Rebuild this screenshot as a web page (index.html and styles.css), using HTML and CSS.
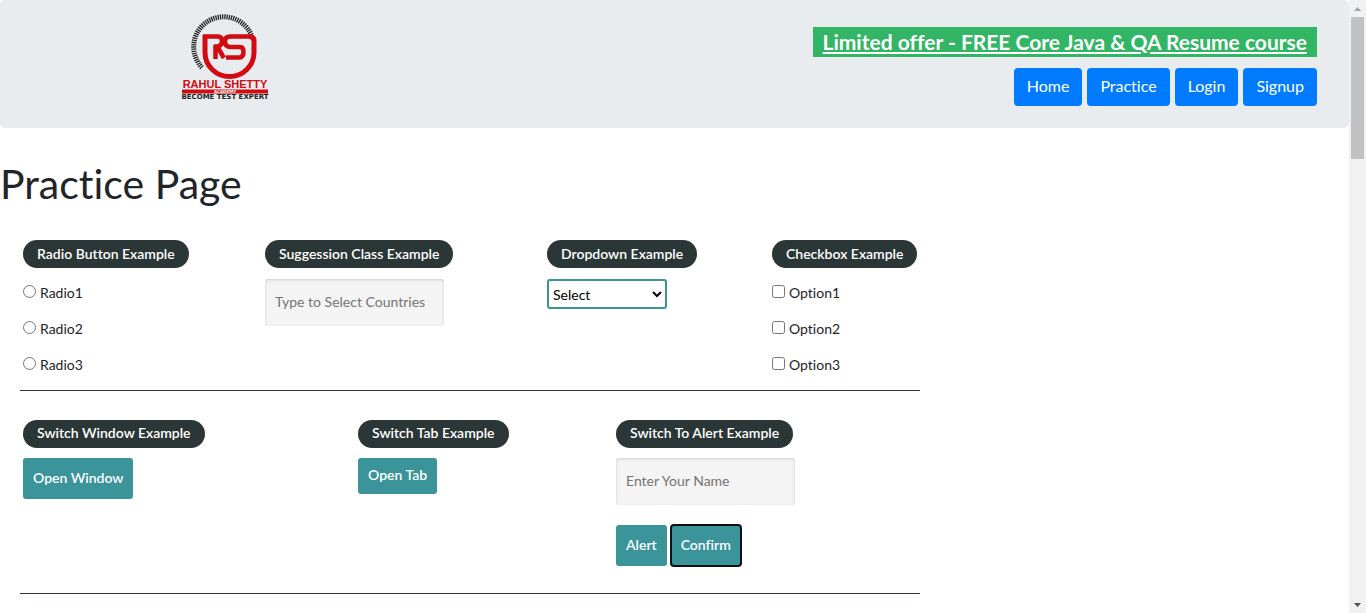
FILE: index.html
```html
<!DOCTYPE html>
<html lang="en">
<head>
<meta charset="utf-8">
<title>Practice Page</title>
<link rel="stylesheet" href="styles.css">
</head>
<body>
<div class="page">
  <header class="banner">
    <a class="brand" href="#" aria-label="Rahul Shetty Academy">
      <svg class="logo" viewBox="0 0 86 87" width="86" height="87" aria-hidden="true">
        <path d="M20 55.500A30 30 0 1 1 69.500 23.500" fill="none" stroke="#222" stroke-width="5" stroke-dasharray="1.300 0.900"/>
        <path d="M23 23V40.500A24.500 24 0 0 0 72 40.500V29Q72 24.500 67 24.500" fill="none" stroke="#d20a11" stroke-width="5"/>
        <path d="M21 24.500H36Q40 24.500 40 29T36 34.500H32M33.500 33V47M35 34L42 46M68 24.500H48Q43 24.500 43 29.500T48 35H58Q61.500 35 61.500 40T58 45.500H44" fill="none" stroke="#d20a11" stroke-width="4.500"/>
        <text class="logo-name" x="43" y="76" text-anchor="middle">RAHUL SHETTY</text>
        <path d="M0 77.500H86V81.500H0z" fill="#d20a11"/>
        <text class="logo-academy" x="43" y="81" text-anchor="middle">ACADEMY</text>
        <text class="logo-tag" x="43" y="87" text-anchor="middle">BECOME TEST EXPERT</text>
      </svg>
    </a>
    <div class="banner-side">
      <a class="offer" href="#">Limited offer - FREE Core Java &amp; QA Resume course</a>
      <nav class="nav">
        <button class="nav-button" type="button">Home</button>
        <button class="nav-button" type="button">Practice</button>
        <button class="nav-button" type="button">Login</button>
        <button class="nav-button" type="button">Signup</button>
      </nav>
    </div>
  </header>

  <main>
    <h1 class="title">Practice Page</h1>
    <div class="examples">
      <section class="row row-four">
        <fieldset class="group">
          <legend class="pill">Radio Button Example</legend>
          <label class="choice"><input type="radio" name="radio">Radio1</label>
          <label class="choice"><input type="radio" name="radio">Radio2</label>
          <label class="choice"><input type="radio" name="radio">Radio3</label>
        </fieldset>
        <fieldset class="group">
          <legend class="pill">Suggession Class Example</legend>
          <input class="field" type="text" placeholder="Type to Select Countries" aria-label="Country">
        </fieldset>
        <fieldset class="group">
          <legend class="pill">Dropdown Example</legend>
          <select class="dropdown" aria-label="Dropdown"><option>Select</option></select>
        </fieldset>
        <fieldset class="group">
          <legend class="pill">Checkbox Example</legend>
          <label class="choice"><input type="checkbox">Option1</label>
          <label class="choice"><input type="checkbox">Option2</label>
          <label class="choice"><input type="checkbox">Option3</label>
        </fieldset>
      </section>
      <section class="row row-three">
        <fieldset class="group">
          <legend class="pill">Switch Window Example</legend>
          <button class="action" type="button">Open Window</button>
        </fieldset>
        <fieldset class="group">
          <legend class="pill">Switch Tab Example</legend>
          <a class="action action-link" href="#">Open Tab</a>
        </fieldset>
        <fieldset class="group">
          <legend class="pill">Switch To Alert Example</legend>
          <input class="field" type="text" placeholder="Enter Your Name" aria-label="Name">
          <div class="actions">
            <button class="action" type="button">Alert</button>
            <button class="action action-focused" type="button">Confirm</button>
          </div>
        </fieldset>
      </section>
    </div>
  </main>
</div>
<div class="scrollbar" aria-hidden="true">
  <svg class="arrow" viewBox="0 0 17 17"><path d="M5 11L8.500 7L12 11z" fill="#a3a3a3"/></svg>
  <div class="thumb"></div>
  <svg class="arrow arrow-down" viewBox="0 0 17 17"><path d="M5 7H12L8.500 11z" fill="#505050"/></svg>
</div>
</body>
</html>
```

FILE: styles.css
```css
* { box-sizing: border-box; }
body {
  margin: 0;
  display: flex;
  height: 100vh;
  overflow: hidden;
  background: #fff;
  color: #212529;
  font: 14px/20px "Trebuchet MS", Lato, sans-serif;
  font-variant-ligatures: none;
}
button, input, select { font: inherit; margin: 0; }
.page { flex: 1; min-width: 0; }
.banner {
  display: flex;
  justify-content: space-between;
  min-height: 128px;
  padding: 12px 32px 22px 182px;
  background: #e9ecef;
  border-radius: 5px;
}
.logo { display: block; overflow: visible; }
.logo-name { font: 700 11px "Liberation Sans", sans-serif; fill: #d20a11; }
.logo-academy { font: 700 4px "DejaVu Sans", sans-serif; fill: #fff; }
.logo-tag { font: 700 7px "DejaVu Sans", sans-serif; fill: #222; }
.banner-side {
  display: flex;
  flex-direction: column;
  align-items: flex-end;
  gap: 11px;
  padding-top: 15px;
}
.offer {
  padding: 0 10px;
  background: #32b665;
  color: #fff;
  font-size: 21px;
  font-weight: 700;
  line-height: 30px;
  text-decoration: underline;
}
.nav { display: flex; gap: 5px; }
.nav-button {
  height: 38px;
  padding: 0 13px 2px;
  border: 0;
  border-radius: 4px;
  background: #007bff;
  color: #fff;
  font-size: 16px;
}
.title {
  margin: 32px 0;
  font-size: 41px;
  font-weight: 400;
  line-height: 48px;
}
.examples { max-width: 900px; margin-left: 20px; }
.row {
  display: grid;
  padding: 0 3px;
  border-bottom: 1px solid #2b3636;
}
.row-four { grid-template-columns: 242fr 282fr 225fr 145fr; padding-bottom: 3px; }
.row-three { grid-template-columns: 335fr 258fr 301fr; padding: 29px 3px 27px; }
.group { min-width: 0; margin: 0; padding: 0; border: 0; }
.pill {
  height: 28px;
  margin-bottom: 11px;
  padding: 0 14px;
  border-radius: 14px;
  background: #2b3636;
  color: #fff;
  font-weight: 600;
  line-height: 28px;
  white-space: nowrap;
}
.row-three .pill { margin-bottom: 10px; line-height: 26px; }
.choice {
  display: flex;
  align-items: center;
  gap: 4px;
  height: 28px;
  margin-bottom: 8px;
}
.choice input { width: 13px; height: 13px; margin-bottom: 3px; }
.field {
  display: block;
  width: 179px;
  height: 47px;
  padding: 0 10px 2px;
  border: 0;
  border-radius: 3px;
  background: #f4f4f4;
  box-shadow: inset 0 1px 3px #ccc;
}
.field::placeholder { color: #757575; }
.dropdown {
  width: 120px;
  height: 30px;
  border: 2px solid #3a9499;
  border-radius: 3px;
  background: #fff;
  color: #000;
}
.action {
  display: inline-block;
  height: 41px;
  padding: 0 10px 2px;
  border: 0;
  border-radius: 3px;
  background: #3a9499;
  color: #fff;
  font-weight: 600;
}
.action-link { height: 36px; line-height: 34px; text-decoration: none; }
.actions { display: flex; gap: 4px; margin-top: 20px; }
.action-focused { outline: 2px solid #101010; outline-offset: -1px; }
.scrollbar {
  display: flex;
  flex-direction: column;
  width: 17px;
  background: #f1f1f1;
}
.arrow { width: 17px; height: 17px; }
.arrow-down { margin-top: auto; }
.thumb { height: 142px; margin: 0 2px; background: #c1c1c1; }
```
